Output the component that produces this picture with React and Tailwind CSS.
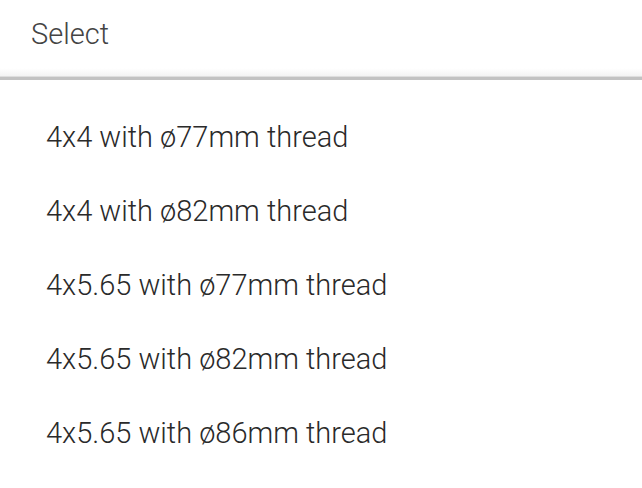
export default function App() {
  const items = [
    "4x4 with ø77mm thread",
    "4x4 with ø82mm thread",
    "4x5.65 with ø77mm thread",
    "4x5.65 with ø82mm thread",
    "4x5.65 with ø86mm thread",
  ];
  return (
    <div className="w-[642px] h-[488px] bg-white overflow-hidden" style={{ fontFamily: "Roboto, 'Liberation Sans', sans-serif" }}>
      <div className="h-[76px] flex items-start pt-[16px] pl-[31px] text-[29px] leading-[36px] font-light text-[#444444] bg-gradient-to-b from-white from-[90%] to-[#f3f3f3]">
        Select
      </div>
      <div className="h-[4px] bg-[#c2c2c2] border-t border-[#dedede]"></div>
      <ul className="pt-[21px]">
        {items.map((t) => (
          <li key={t} className="h-[74px] flex items-center pl-[46px] text-[29px] font-light text-[#2a2a2a]">
            {t}
          </li>
        ))}
      </ul>
    </div>
  );
}
